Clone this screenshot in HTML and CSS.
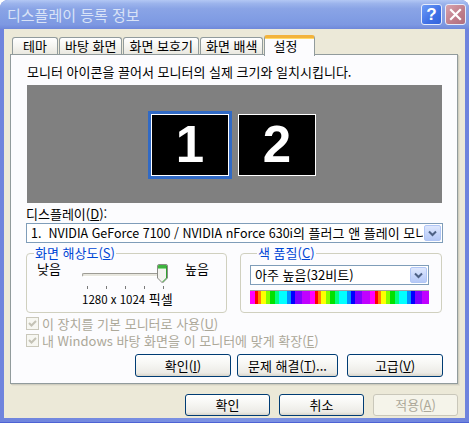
FILE: index.html
```html
<!DOCTYPE html>
<html lang="ko">
<head>
<meta charset="utf-8">
<title>디스플레이 등록 정보</title>
<link rel="stylesheet" href="styles.css">
</head>
<body>
<div class="window">
  <div class="titlebar">
    <span class="title">디스플레이 등록 정보</span>
    <span class="tb-btn tb-help">?</span>
    <span class="tb-btn tb-close">
      <svg width="13" height="13" viewBox="0 0 13 13"><path d="M2 2 L11 11 M11 2 L2 11" stroke="#fff" stroke-width="2.2" stroke-linecap="square"/></svg>
    </span>
  </div>
  <div class="client">
    <div class="tabs">
      <span class="tab tab-first">테마</span>
      <span class="tab">바탕 화면</span>
      <span class="tab">화면 보호기</span>
      <span class="tab">화면 배색</span>
      <span class="tab tab-active">설정</span>
    </div>
    <div class="panel">
      <p class="hint">모니터 아이콘을 끌어서 모니터의 실제 크기와 일치시킵니다.</p>
      <div class="canvas">
        <div class="mon-sel"><div class="mon">1</div></div>
        <div class="mon mon-2">2</div>
      </div>
      <div class="label">디스플레이(<u>D</u>):</div>
      <div class="select">
        <span class="select-text"><span class="lat">1.&nbsp; NVIDIA GeForce 7100 / NVIDIA nForce 630i</span>의 플러그 앤 플레이 모니터</span>
        <span class="select-btn"><svg width="9" height="7" viewBox="0 0 9 7"><path d="M1 1.5 L4.5 5 L8 1.5" fill="none" stroke="#4d6185" stroke-width="2"/></svg></span>
      </div>
      <div class="groups">
        <fieldset class="group group-res">
          <legend>화면 해상도(<u>S</u>)</legend>
          <div class="slider-row">
            <span class="lowhigh">낮음</span>
            <div class="slider">
              <div class="track"></div>
              <svg class="thumb" width="11" height="20" viewBox="0 0 11 20">
                <path d="M0.5 2 Q0.5 0.5 2 0.5 H9 Q10.5 0.5 10.5 2 V14 L5.5 19 L0.5 14 Z" fill="#f3f3ef" stroke="#8b8b86"/>
                <path d="M1 1.5 Q1 1 2 1 H9 Q10 1 10 1.5 V4.5 H1 Z" fill="#3fb43f"/>
                <path d="M1 4.5 H10" stroke="#8fd88f"/>
                <path d="M9.5 2 V14 L5.5 18" fill="none" stroke="#2fa12f" stroke-width="1"/>
              </svg>
              <div class="ticks"><i></i><i></i><i></i><i></i><i></i></div>
              <div class="res-text"><span class="lat lat-digits">1280 x 1024</span> 픽셀</div>
            </div>
            <span class="lowhigh">높음</span>
          </div>
        </fieldset>
        <fieldset class="group group-color">
          <legend>색 품질(<u>C</u>)</legend>
          <div class="select select-small">
            <span class="select-text">아주 높음(32비트)</span>
            <span class="select-btn"><svg width="9" height="7" viewBox="0 0 9 7"><path d="M1 1.5 L4.5 5 L8 1.5" fill="none" stroke="#4d6185" stroke-width="2"/></svg></span>
          </div>
          <div class="colorbar"></div>
        </fieldset>
      </div>
      <div class="check">
        <span class="box"><svg width="11" height="11" viewBox="0 0 11 11"><path d="M2 5 L4.5 7.5 L9 3" fill="none" stroke="#c4c2b5" stroke-width="2"/></svg></span>
        <span>이 장치를 기본 모니터로 사용(<u>U</u>)</span>
      </div>
      <div class="check">
        <span class="box"><svg width="11" height="11" viewBox="0 0 11 11"><path d="M2 5 L4.5 7.5 L9 3" fill="none" stroke="#c4c2b5" stroke-width="2"/></svg></span>
        <span>내 Windows 바탕 화면을 이 모니터에 맞게 확장(<u>E</u>)</span>
      </div>
      <div class="panel-buttons">
        <button class="btn btn-w96">확인(<u>I</u>)</button>
        <button class="btn btn-w101">문제 해결(<u>T</u>)...</button>
        <button class="btn btn-w96 btn-last">고급(<u>V</u>)</button>
      </div>
    </div>
    <div class="dialog-buttons">
      <button class="btn btn-dlg">확인</button>
      <button class="btn btn-dlg">취소</button>
      <button class="btn btn-dlg btn-disabled">적용(<u>A</u>)</button>
    </div>
  </div>
</div>
</body>
</html>
```
FILE: styles.css
```css
* { box-sizing: border-box; }
html, body { margin: 0; padding: 0; }
body {
  width: 469px;
  height: 423px;
  overflow: hidden;
  font-family: "Noto Sans CJK KR", "Liberation Sans", sans-serif;
  font-size: 13px;
  line-height: 14px;
  color: #000;
  background: #fff;
}
u { text-decoration: underline; text-underline-offset: 1px; }
.lat { font-size: 12.5px; }
.lat-digits { font-size: 11.5px; }

.window {
  width: 469px;
  height: 423px;
  display: flex;
  flex-direction: column;
  background: linear-gradient(to right, #6f84dd, #7d93e3 50%, #6f84dd);
  border-radius: 8px 8px 0 0;
  padding: 0 4px 4px 4px;
  border-bottom: 1px solid #4d62d4;
}

.titlebar {
  height: 29px;
  display: flex;
  align-items: center;
  margin: 0 -4px;
  padding: 0 3px 0 7px;
  border-radius: 8px 8px 0 0;
  background: linear-gradient(to bottom, #b3c7f4 0%, #9cb4ec 12%, #8aa4e6 30%, #829ee4 60%, #7d98e2 85%, #6f88da 100%);
}
.title {
  flex: 1;
  font-size: 15px;
  line-height: 18px;
  color: #d9e3f7;
}
.tb-btn {
  width: 21px;
  height: 21px;
  border: 1px solid #e6ecfb;
  border-radius: 3px;
  display: flex;
  align-items: center;
  justify-content: center;
  color: #fff;
  font-family: "Liberation Sans", sans-serif;
  font-weight: bold;
  font-size: 17px;
  line-height: 1;
}
.tb-help {
  background: linear-gradient(135deg, #6d9cf7, #3f70e6 60%, #3465dc);
  margin-right: 3px;
}
.tb-close {
  background: linear-gradient(135deg, #d9a3ad, #be7c8a 60%, #b06f7f);
}

.client {
  flex: 1;
  background: #ece9d8;
  padding: 6px 0 0 6px;
  display: flex;
  flex-direction: column;
}

.tabs {
  display: flex;
  align-items: flex-end;
  height: 19px;
  padding-left: 2px;
  position: relative;
  z-index: 1;
}
.tab {
  height: 17px;
  padding: 0 5px;
  margin-right: 1px;
  border: 1px solid #919b9c;
  border-bottom: none;
  border-radius: 3px 3px 0 0;
  background: linear-gradient(to bottom, #ffffff, #f5f5f1 50%, #e9e8e0);
  line-height: 16px;
  white-space: nowrap;
  text-align: center;
}
.tab-first { min-width: 46px; }
.tab-active {
  height: 21px;
  min-width: 51px;
  margin-bottom: -2px;
  padding: 0 8px;
  text-align: left;
  background: #fcfcfe;
  border-top: 3px solid #f3b33c;
  line-height: 16px;
  box-shadow: inset 0 1px 0 #ffd96a;
}

.panel {
  width: 448px;
  border: 1px solid #919b9c;
  background: #fcfcfe;
  box-shadow: 1px 1px 0 #d0cec0, 2px 2px 0 #e2dfcf;
  padding: 10px 14px 6px 15px;
}
.hint {
  margin: 0 0 6px 1px;
}
.canvas {
  height: 118px;
  margin: 0 1px;
  background: #808080;
  display: flex;
  align-items: flex-start;
  padding: 26px 0 0 121px;
  gap: 6px;
}
.mon {
  width: 78px;
  height: 62px;
  border: 1px solid #fff;
  background: #000;
  color: #fff;
  font-family: "Liberation Sans", Arial, sans-serif;
  font-weight: bold;
  font-size: 51px;
  line-height: 60px;
  text-align: center;
}
.mon-sel {
  padding: 3px;
  background: #316ac5;
}
.mon-2 { margin-top: 3px; }

.label {
  margin-top: 4px;
}
.select {
  margin-top: 2px;
  height: 20px;
  border: 1px solid #7f9db9;
  background: #fff;
  display: flex;
  align-items: stretch;
}
.select-text {
  flex: 1;
  overflow: hidden;
  white-space: nowrap;
  padding-left: 4px;
  line-height: 18px;
}
.select-btn {
  width: 17px;
  margin: 1px;
  border: 1px solid #b1c6f6;
  border-radius: 2px;
  background: linear-gradient(to bottom, #dfe8fd, #c4d4fb 60%, #b6c9f7);
  display: flex;
  align-items: center;
  justify-content: center;
}

.groups {
  display: flex;
  gap: 13px;
  margin-top: 3px;
}
.group {
  margin: 0;
  padding: 2px 0 0 0;
  border: 1px solid #d0d0bf;
  border-radius: 4px;
  height: 67px;
}
.group legend {
  margin-left: 7px;
  padding: 0 1px;
  color: #0046d5;
}
.group-res { width: 201px; }
.group-color { width: 202px; padding-left: 9px; padding-top: 5px; }

.slider-row {
  display: flex;
  align-items: flex-start;
  padding-left: 10px;
}
.lowhigh { width: 24px; white-space: nowrap; }
.slider {
  position: relative;
  width: 103px;
  margin-left: 21px;
  height: 46px;
}
.track {
  margin-top: 11px;
  width: 84px;
  height: 4px;
  border: 1px solid #9d9c95;
  border-bottom-color: #fff;
  border-right-color: #fff;
  border-radius: 2px;
  background: #e8e7df;
}
.thumb {
  position: absolute;
  left: 75px;
  top: 2px;
}
.ticks {
  display: flex;
  justify-content: space-between;
  width: 77px;
  margin: 9px 0 0 5px;
  height: 3px;
}
.ticks i {
  width: 1px;
  height: 3px;
  background: #7a7a7a;
}
.res-text {
  margin-top: 3px;
  white-space: nowrap;
}

.select-small {
  margin-top: 0;
  width: 179px;
  height: 20px;
}
.colorbar {
  margin-top: 5px;
  width: 179px;
  height: 14px;
  border-top: 1px solid #a0a0a0;
  background: repeating-linear-gradient(to right,
    #ff00ff 0, #ff00ff 5px,
    #ff0000 5px, #ff0000 8px,
    #ff8000 8px, #ff8000 11px,
    #ffff00 11px, #ffff00 16px,
    #80ff00 16px, #80ff00 20px,
    #00e000 20px, #00e000 25px,
    #00ff80 25px, #00ff80 29px,
    #00ffff 29px, #00ffff 37px,
    #0090ff 37px, #0090ff 41px,
    #0000ff 41px, #0000ff 45px,
    #8000ff 45px, #8000ff 52px,
    #c000ff 52px, #c000ff 60px);
}

.check {
  margin-top: 2px;
  height: 17px;
  display: flex;
  align-items: center;
  color: #aca899;
  white-space: nowrap;
}
.check + .check { margin-top: 0; }
.box {
  width: 13px;
  height: 13px;
  border: 1px solid #cac8bb;
  background: #f7f7f2;
  margin-right: 3px;
  display: flex;
  align-items: center;
  justify-content: center;
}

.btn {
  height: 23px;
  padding: 0;
  border: 1px solid #003c74;
  border-radius: 3px;
  background: linear-gradient(to bottom, #ffffff 0%, #f7f7f4 40%, #ecebe6 85%, #d8d5ca 100%);
  font-family: "Noto Sans CJK KR", "Liberation Sans", sans-serif;
  font-size: 13px;
  color: #000;
  line-height: 20px;
}
.panel-buttons {
  display: flex;
  justify-content: flex-end;
  gap: 6px;
  margin-top: 5px;
}
.btn-w96 { width: 96px; }
.btn-w101 { width: 101px; }
.btn-last { margin-left: 3px; }

.dialog-buttons {
  display: flex;
  justify-content: flex-end;
  gap: 9px;
  margin-top: 10px;
  padding-right: 7px;
}
.btn-dlg { width: 85px; height: 22px; }
.btn-disabled {
  border-color: #c9c7ba;
  background: #f5f4ea;
  color: #aca899;
}
```
